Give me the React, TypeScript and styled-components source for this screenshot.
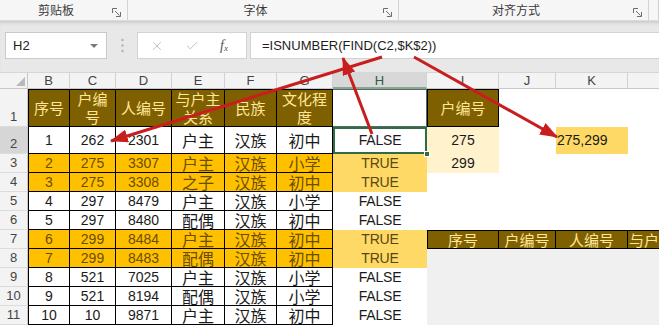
import React from "react";
import styled, { createGlobalStyle } from "styled-components";
import { X, Check } from "lucide-react";

const BROWN = "#7f6000";
const ORANGE = "#ffc000";
const GOLD = "#ffd966";
const PALE = "#fff2cc";
const SEL = "#2e6b47";
const RED = "#c81e1e";

const COLS = [28, 42, 46, 56, 53, 52, 56, 94, 72, 57, 72, 72];
const ROWS = [16, 38, 27, 19, 19, 19, 19, 19, 19, 19, 19, 19];
const LETTERS = ["B", "C", "D", "E", "F", "G", "H", "I", "J", "K", "L"];

const HEADS = ["序号", "户编\n号", "人编号", "与户主\n关系", "民族", "文化程\n度"];

const PEOPLE: string[][] = [
  ["1", "262", "2301", "户主", "汉族", "初中"],
  ["2", "275", "3307", "户主", "汉族", "小学"],
  ["3", "275", "3308", "之子", "汉族", "初中"],
  ["4", "297", "8479", "户主", "汉族", "小学"],
  ["5", "297", "8480", "配偶", "汉族", "初中"],
  ["6", "299", "8484", "户主", "汉族", "初中"],
  ["7", "299", "8483", "配偶", "汉族", "初中"],
  ["8", "521", "7025", "户主", "汉族", "小学"],
  ["9", "521", "8194", "配偶", "汉族", "小学"],
  ["10", "10", "9871", "户主", "汉族", "初中"],
];
const FOUND = [false, true, true, false, false, true, true, false, false, false];
const BANDED = [3, 4, 7, 8];

const GlobalStyle = createGlobalStyle`
  * { box-sizing: border-box; }
  html, body { margin: 0; padding: 0; background: #fff; }
  body { font-family: "Liberation Sans", "Noto Sans CJK SC", sans-serif; }
`;

const Page = styled.div`
  position: relative;
  width: 659px;
  height: 325px;
  overflow: hidden;
  background: #fff;
`;

const Ribbon = styled.div`
  display: grid;
  grid-template-columns: 128px 271px 250px 1fr;
  height: 21px;
  background: #f6f6f6;
  border-bottom: 1px solid #dcdcdc;
`;

const Group = styled.div`
  display: flex;
  align-items: center;
  border-right: 1px solid #d2d2d2;
  padding-right: 6px;
  font-family: "Noto Sans CJK SC", sans-serif;
  font-size: 12px;
  line-height: 16px;
  color: #3a3a3a;
`;

const GroupLabel = styled.span`
  flex: 1;
  text-align: center;
`;

const Launcher = styled.svg`
  width: 9px;
  height: 9px;
  margin-top: 5px;
`;

const FormulaBar = styled.div`
  display: flex;
  align-items: flex-start;
  height: 52px;
  padding: 11px 0 0 5px;
  background: #e8e8e8;
  box-shadow: inset 0 4px 4px -3px rgba(0, 0, 0, 0.18);
  border-bottom: 1px solid #d6d6d6;
`;

const NameBox = styled.div`
  display: flex;
  align-items: center;
  justify-content: space-between;
  width: 102px;
  height: 27px;
  padding: 0 8px 0 7px;
  background: #fff;
  border: 1px solid #c9c9c9;
  font-size: 13px;
  color: #222;
`;

const Caret = styled.span`
  width: 0;
  height: 0;
  border-left: 4px solid transparent;
  border-right: 4px solid transparent;
  border-top: 4px solid #7a7a7a;
`;

const Grip = styled.div`
  display: flex;
  align-items: center;
  justify-content: center;
  width: 30px;
  height: 27px;
`;

const FxBox = styled.div`
  display: flex;
  align-items: center;
  gap: 21px;
  width: 110px;
  height: 27px;
  padding-left: 12px;
  background: #fff;
  border: 1px solid #d3d3d3;
  color: #b8b8b8;
`;

const Fx = styled.span`
  font-family: "Liberation Serif", serif;
  font-style: italic;
  font-size: 14px;
  color: #555;
  & sub {
    font-size: 9px;
    vertical-align: -1px;
  }
`;

const FormulaInput = styled.div`
  flex: 1;
  display: flex;
  align-items: center;
  height: 27px;
  margin-left: 3px;
  padding-left: 11px;
  background: #fff;
  border: 1px solid #d3d3d3;
  border-right: none;
  font-size: 13px;
  color: #1e1e1e;
`;

const Sheet = styled.div`
  display: grid;
  grid-template-columns: ${COLS.map((c) => c + "px").join(" ")};
  grid-template-rows: ${ROWS.map((r) => r + "px").join(" ")};
  width: ${COLS.reduce((a, b) => a + b, 0)}px;
  font-size: 14px;
  line-height: 17px;
  color: #1a1a1a;
`;

const SelectAll = styled.div`
  position: relative;
  background: #f3f3f3;
  border-right: 1px solid #c8c8c8;
  border-bottom: 1px solid #c8c8c8;
  &::after {
    content: "";
    position: absolute;
    right: 2px;
    bottom: 2px;
    border-left: 9px solid transparent;
    border-bottom: 9px solid #b9b9b9;
  }
`;

const ColHead = styled.div<{ $active?: boolean }>`
  display: flex;
  align-items: center;
  justify-content: center;
  background: ${(p) => (p.$active ? "#d8d8d8" : "#f3f3f3")};
  border-right: 1px solid #d2d2d2;
  border-bottom: ${(p) => (p.$active ? `2px solid #8aa596` : "1px solid #c8c8c8")};
  font-size: 13px;
  line-height: 15px;
  color: ${(p) => (p.$active ? "#2f5a43" : "#444")};
`;

const RowHead = styled.div<{ $active?: boolean }>`
  display: flex;
  align-items: flex-end;
  justify-content: center;
  padding-bottom: 1px;
  background: ${(p) => (p.$active ? "#d6d6d6" : "#f3f3f3")};
  border-right: 1px solid #c8c8c8;
  border-bottom: 1px solid #dcdcdc;
  font-size: 13px;
  line-height: 16px;
  color: #444;
`;

const Boxed = styled.div<{ $top?: boolean; $left?: boolean }>`
  display: flex;
  align-items: center;
  justify-content: center;
  text-align: center;
  white-space: pre-line;
  border-right: 1px solid #000;
  border-bottom: 1px solid #000;
  border-top: ${(p) => (p.$top ? "1px solid #000" : "none")};
  border-left: ${(p) => (p.$left ? "1px solid #000" : "none")};
`;

const TableHead = styled(Boxed)<{ $start?: boolean }>`
  justify-content: ${(p) => (p.$start ? "flex-start" : "center")};
  padding-left: ${(p) => (p.$start ? "1px" : "0")};
  background: ${BROWN};
  color: #ffe699;
  font-family: "Noto Sans CJK SC", sans-serif;
  font-size: 15px;
  line-height: 18px;
  white-space: pre;
`;

const TableCell = styled(Boxed)<{ $band?: boolean; $cjk?: boolean }>`
  background: ${(p) => (p.$band ? ORANGE : "#fff")};
  color: ${(p) => (p.$band ? "#6b4d00" : "#1a1a1a")};
  font-family: ${(p) => (p.$cjk ? `"Noto Sans CJK SC", sans-serif` : `"Liberation Sans", sans-serif`)};
  font-size: ${(p) => (p.$cjk ? "16px" : "14px")};
  line-height: 18px;
`;

const TitleBlank = styled.div`
  border: 1px solid #51705e;
  border-left: none;
  background: #fff;
`;

const ResultCell = styled.div<{ $hit?: boolean }>`
  display: flex;
  align-items: center;
  justify-content: center;
  background: ${(p) => (p.$hit ? GOLD : "#fff")};
  color: ${(p) => (p.$hit ? "#5a4710" : "#1a1a1a")};
  letter-spacing: -0.2px;
`;

const ActiveCell = styled(ResultCell)`
  position: relative;
  box-shadow: inset 0 0 0 2px ${SEL};
`;

const FillHandle = styled.span`
  position: absolute;
  right: -3px;
  bottom: -3px;
  width: 6px;
  height: 6px;
  background: ${SEL};
  border: 1px solid #fff;
`;

const LookupCell = styled.div`
  display: flex;
  align-items: center;
  justify-content: center;
  background: ${PALE};
`;

const KeyCell = styled.div`
  display: flex;
  align-items: center;
  padding-left: 1px;
  background: ${GOLD};
`;

const Blank = styled.div`
  background: #fff;
`;

const Shade = styled.div`
  background: #f0f0f0;
`;

const Arrows = styled.svg`
  position: absolute;
  left: 0;
  top: 0;
  width: 659px;
  height: 325px;
  pointer-events: none;
`;

const ARROWS = [
  { x1: 382, y1: 57, x2: 111, y2: 141 },
  { x1: 372, y1: 134, x2: 343, y2: 58 },
  { x1: 414, y1: 57, x2: 557, y2: 137 },
];

function LauncherIcon() {
  return (
    <Launcher viewBox="0 0 9 9" fill="none" stroke="#6d6d6d" strokeWidth="1">
      <path d="M0.5 5V0.5H5" />
      <path d="M3 3l4.5 4.5M8.5 4v4.5H4" />
    </Launcher>
  );
}

function renderRow(r: number) {
  const cells: React.ReactNode[] = [];
  cells.push(
    <RowHead key="h" $active={r === 2}>
      {r}
    </RowHead>
  );

  if (r === 1) {
    HEADS.forEach((h, i) =>
      cells.push(
        <TableHead key={i} $top $left={i === 0}>
          {h}
        </TableHead>
      )
    );
    cells.push(<TitleBlank key="H" />);
    cells.push(
      <TableHead key="I" $top $left>
        户编号
      </TableHead>
    );
    cells.push(<Blank key="J" />, <Blank key="K" />, <Blank key="L" />);
    return cells;
  }

  const person = PEOPLE[r - 2];
  const band = BANDED.includes(r);
  person.forEach((v, i) =>
    cells.push(
      <TableCell key={i} $left={i === 0} $band={band} $cjk={i >= 3}>
        {v}
      </TableCell>
    )
  );

  const found = FOUND[r - 2];
  if (r === 2) {
    cells.push(
      <ActiveCell key="H">
        FALSE
        <FillHandle />
      </ActiveCell>
    );
  } else {
    cells.push(
      <ResultCell key="H" $hit={found}>
        {found ? "TRUE" : "FALSE"}
      </ResultCell>
    );
  }

  if (r === 2 || r === 3) {
    cells.push(<LookupCell key="I">{r === 2 ? "275" : "299"}</LookupCell>);
  } else if (r === 7) {
    cells.push(
      <TableHead key="I" $top $left>
        序号
      </TableHead>
    );
  } else if (r > 7) {
    cells.push(<Shade key="I" />);
  } else {
    cells.push(<Blank key="I" />);
  }

  if (r === 7) {
    cells.push(
      <TableHead key="J" $top>
        户编号
      </TableHead>,
      <TableHead key="K" $top>
        人编号
      </TableHead>,
      <TableHead key="L" $top $start>
        与户主关系
      </TableHead>
    );
  } else if (r > 7) {
    cells.push(<Shade key="J" />, <Shade key="K" />, <Shade key="L" />);
  } else {
    cells.push(<Blank key="J" />);
    cells.push(r === 2 ? <KeyCell key="K">275,299</KeyCell> : <Blank key="K" />);
    cells.push(<Blank key="L" />);
  }
  return cells;
}

export default function App() {
  return (
    <Page>
      <GlobalStyle />
      <Ribbon>
        <Group>
          <GroupLabel>剪贴板</GroupLabel>
          <LauncherIcon />
        </Group>
        <Group>
          <GroupLabel>字体</GroupLabel>
          <LauncherIcon />
        </Group>
        <Group>
          <GroupLabel>对齐方式</GroupLabel>
          <LauncherIcon />
        </Group>
        <Group />
      </Ribbon>

      <FormulaBar>
        <NameBox>
          H2
          <Caret />
        </NameBox>
        <Grip>
          <svg width="3" height="15" viewBox="0 0 3 15" fill="#b3b3b3">
            <circle cx="1.5" cy="2" r="1.2" />
            <circle cx="1.5" cy="7.5" r="1.2" />
            <circle cx="1.5" cy="13" r="1.2" />
          </svg>
        </Grip>
        <FxBox>
          <X size={14} strokeWidth={1.5} />
          <Check size={14} strokeWidth={1.5} />
          <Fx>
            f<sub>x</sub>
          </Fx>
        </FxBox>
        <FormulaInput>=ISNUMBER(FIND(C2,$K$2))</FormulaInput>
      </FormulaBar>

      <Sheet>
        <SelectAll />
        {LETTERS.map((l) => (
          <ColHead key={l} $active={l === "H"}>
            {l}
          </ColHead>
        ))}
        {ROWS.slice(1).map((_, i) => renderRow(i + 1))}
      </Sheet>

      <Arrows viewBox="0 0 659 325">
        <defs>
          <marker
            id="tip"
            markerWidth="6"
            markerHeight="4.4"
            refX="5.6"
            refY="2.2"
            orient="auto"
            markerUnits="strokeWidth"
          >
            <path d="M0 0L6 2.2L0 4.4z" fill={RED} />
          </marker>
        </defs>
        {ARROWS.map((a, i) => (
          <line
            key={i}
            {...a}
            stroke={RED}
            strokeWidth="3"
            markerEnd="url(#tip)"
          />
        ))}
      </Arrows>
    </Page>
  );
}
